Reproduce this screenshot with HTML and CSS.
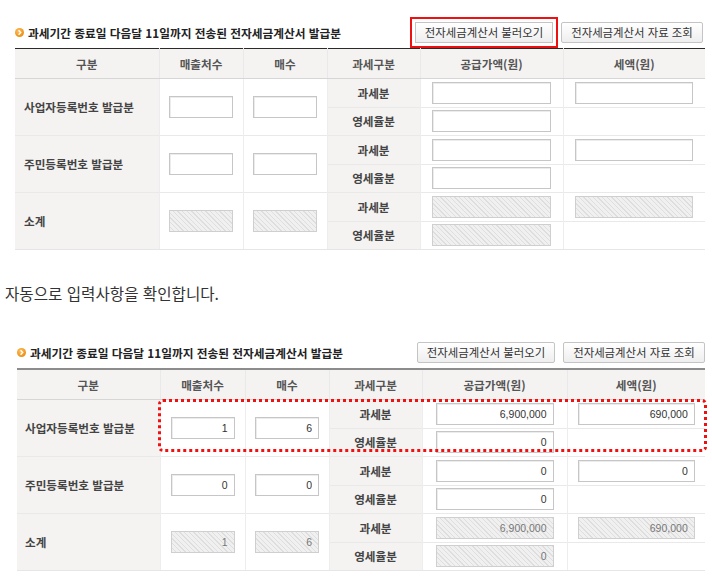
FILE: index.html
```html
<!DOCTYPE html>
<html lang="ko">
<head>
<meta charset="utf-8">
<title>전자세금계산서 발급분</title>
<link rel="stylesheet" href="styles.css">
</head>
<body>
<div class="section s1">
  <div class="bar">
    <h3 class="title"><svg class="bullet" viewBox="0 0 10 10" width="9" height="9"><defs><radialGradient id="og1" cx="40%" cy="35%" r="70%"><stop offset="0" stop-color="#ffc060"/><stop offset="1" stop-color="#e98a0c"/></radialGradient></defs><circle cx="5" cy="5" r="5" fill="url(#og1)"/><path d="M4 2.6 L6.3 5 L4 7.4" fill="none" stroke="#fff" stroke-width="1.5"/></svg>과세기간 종료일 다음달 11일까지 전송된 전자세금계산서 발급분</h3>
    <div class="btns">
      <button class="btn btn-load hl">전자세금계산서 불러오기</button>
      <button class="btn btn-view">전자세금계산서 자료 조회</button>
    </div>
  </div>
  <table class="grid">
    <colgroup><col class="c1"><col class="c2"><col class="c3"><col class="c4"><col class="c5"><col class="c6"></colgroup>
    <thead>
      <tr><th>구분</th><th>매출처수</th><th>매수</th><th>과세구분</th><th>공급가액(원)</th><th>세액(원)</th></tr>
    </thead>
    <tbody>
      <tr class="grp"><th rowspan="2" class="lbl">사업자등록번호 발급분</th><td rowspan="2"><input class="in sm"></td><td rowspan="2"><input class="in sm"></td><th class="kind">과세분</th><td><input class="in lg"></td><td><input class="in lg2"></td></tr>
      <tr class="sub"><th class="kind">영세율분</th><td><input class="in lg"></td><td></td></tr>
      <tr class="grp"><th rowspan="2" class="lbl">주민등록번호 발급분</th><td rowspan="2"><input class="in sm"></td><td rowspan="2"><input class="in sm"></td><th class="kind">과세분</th><td><input class="in lg"></td><td><input class="in lg2"></td></tr>
      <tr class="sub"><th class="kind">영세율분</th><td><input class="in lg"></td><td></td></tr>
      <tr class="grp"><th rowspan="2" class="lbl">소계</th><td rowspan="2"><input class="in sm dis" disabled></td><td rowspan="2"><input class="in sm dis" disabled></td><th class="kind">과세분</th><td><input class="in lg dis" disabled></td><td><input class="in lg2 dis" disabled></td></tr>
      <tr class="sub last"><th class="kind">영세율분</th><td><input class="in lg dis" disabled></td><td></td></tr>
    </tbody>
  </table>
</div>

<p class="note">자동으로 입력사항을 확인합니다.</p>

<div class="section s2">
  <div class="bar">
    <h3 class="title"><svg class="bullet" viewBox="0 0 10 10" width="9" height="9"><defs><radialGradient id="og2" cx="40%" cy="35%" r="70%"><stop offset="0" stop-color="#ffc060"/><stop offset="1" stop-color="#e98a0c"/></radialGradient></defs><circle cx="5" cy="5" r="5" fill="url(#og2)"/><path d="M4 2.6 L6.3 5 L4 7.4" fill="none" stroke="#fff" stroke-width="1.5"/></svg>과세기간 종료일 다음달 11일까지 전송된 전자세금계산서 발급분</h3>
    <div class="btns">
      <button class="btn btn-load">전자세금계산서 불러오기</button>
      <button class="btn btn-view">전자세금계산서 자료 조회</button>
    </div>
  </div>
  <table class="grid">
    <colgroup><col class="c1"><col class="c2"><col class="c3"><col class="c4"><col class="c5"><col class="c6"></colgroup>
    <thead>
      <tr><th>구분</th><th>매출처수</th><th>매수</th><th>과세구분</th><th>공급가액(원)</th><th>세액(원)</th></tr>
    </thead>
    <tbody>
      <tr class="grp"><th rowspan="2" class="lbl">사업자등록번호 발급분</th><td rowspan="2"><input class="in sm" value="1"></td><td rowspan="2"><input class="in sm" value="6"></td><th class="kind">과세분</th><td><input class="in lg" value="6,900,000"></td><td><input class="in lg2" value="690,000"></td></tr>
      <tr class="sub"><th class="kind">영세율분</th><td><input class="in lg" value="0"></td><td></td></tr>
      <tr class="grp"><th rowspan="2" class="lbl">주민등록번호 발급분</th><td rowspan="2"><input class="in sm" value="0"></td><td rowspan="2"><input class="in sm" value="0"></td><th class="kind">과세분</th><td><input class="in lg" value="0"></td><td><input class="in lg2" value="0"></td></tr>
      <tr class="sub"><th class="kind">영세율분</th><td><input class="in lg" value="0"></td><td></td></tr>
      <tr class="grp"><th rowspan="2" class="lbl">소계</th><td rowspan="2"><input class="in sm dis" value="1" disabled></td><td rowspan="2"><input class="in sm dis" value="6" disabled></td><th class="kind">과세분</th><td><input class="in lg dis" value="6,900,000" disabled></td><td><input class="in lg2 dis" value="690,000" disabled></td></tr>
      <tr class="sub last"><th class="kind">영세율분</th><td><input class="in lg dis" value="0" disabled></td><td></td></tr>
    </tbody>
  </table>
  <div class="mark"></div>
</div>
</body>
</html>
```

FILE: styles.css
```css
html, body {
  margin: 0;
  padding: 0;
  background: #fff;
}
body {
  font-family: "Noto Sans CJK KR", "Noto Sans", sans-serif;
  color: #333;
}

.section {
  margin: 0 7px 0 15px;
}
.s1 {
  margin-top: 22px;
}
.s2 {
  margin-top: 39px;
  margin-left: 17px;
  position: relative;
}

.bar {
  display: flex;
  align-items: center;
  justify-content: space-between;
  height: 21px;
  margin-bottom: 5px;
}
.title {
  display: flex;
  align-items: center;
  gap: 4px;
  margin: 0;
  font-size: 11.7px;
  line-height: 14px;
  font-weight: bold;
  color: #222;
}
.bullet {
  display: block;
  flex: none;
}
.btns {
  display: flex;
  gap: 8px;
  padding-right: 2px;
}
.s2 .btns {
  padding-right: 0;
}
.btn {
  height: 21px;
  padding: 0;
  border: 1px solid #c4c4c4;
  border-radius: 2px;
  background: linear-gradient(#ffffff, #eeeeee);
  font-family: "Noto Sans CJK KR", sans-serif;
  font-size: 11.4px;
  line-height: 19px;
  color: #333;
}
.btn-load {
  width: 138px;
}
.btn-view {
  width: 142px;
}
.hl {
  border-radius: 0;
  outline: 2px solid #ee1111;
  outline-offset: 3px;
}

.note {
  margin: 33px 0 0 5px;
  font-size: 15.6px;
  line-height: 20px;
  color: #333;
}

.grid {
  border-collapse: collapse;
  table-layout: fixed;
  width: 690px;
  border-top: 1px solid #2a2a2a;
}
.s2 .grid {
  width: 688px;
  border-top: 2px solid #8c8c8c;
}
.s1 .c1 { width: 144px; }
.s1 .c2 { width: 84px; }
.s1 .c3 { width: 84px; }
.s1 .c4 { width: 93px; }
.s1 .c5 { width: 143px; }
.s1 .c6 { width: 142px; }
.s2 .c1 { width: 143px; }
.s2 .c2 { width: 85px; }
.s2 .c3 { width: 84px; }
.s2 .c4 { width: 93px; }
.s2 .c5 { width: 145px; }
.s2 .c6 { width: 138px; }

.grid th,
.grid td {
  padding: 0;
  font-size: 11.6px;
  line-height: 14px;
}
.grid thead th {
  height: 29px;
  background: #f4f3f2;
  color: #555;
  font-weight: bold;
  border-bottom: 1px solid #d6d6d6;
  border-left: 1px solid #e9e9e9;
}
.grid thead th:first-child {
  border-left: 0;
}
.grid tbody tr {
  height: 28.5px;
}
.grid tbody th,
.grid tbody td {
  border-left: 1px solid #ededed;
  border-top: 1px solid #e9e9e9;
  text-align: center;
  vertical-align: middle;
}
.grid tbody .lbl {
  border-left: 0;
  background: #f4f3f2;
  text-align: left;
  padding-left: 9px;
  color: #444;
  font-weight: bold;
}
.s2 .grid tbody .lbl {
  padding-left: 8px;
}
.grid tbody .kind {
  background: #f4f3f2;
  color: #444;
  font-weight: bold;
}
.grid tbody tr.last th,
.grid tbody tr.last td,
.grid tbody tr.grp:nth-last-child(2) > [rowspan] {
  border-bottom: 1px solid #e6e6e6;
}

.in {
  display: block;
  margin: 0 auto;
  box-sizing: border-box;
  height: 22px;
  padding: 0 6px 0 4px;
  border: 1px solid #c6c6c6;
  box-shadow: inset 1px 1px 0 #ececec;
  background: #fff;
  font-family: "Liberation Sans", Arial, sans-serif;
  font-size: 10.5px;
  color: #333;
  text-align: right;
  outline: none;
}
.sm { width: 64px; }
.lg { width: 119px; }
.lg2 { width: 118px; }
.s2 .lg { width: 118px; }
.s2 .lg2 { width: 117px; }
.in.dis {
  border-color: #cfcfcf;
  box-shadow: none;
  color: #777;
  background: repeating-linear-gradient(45deg, #f0f0f0 0, #f0f0f0 2.5px, #dedede 2.5px, #dedede 3.3px);
}

.mark {
  position: absolute;
  left: 141px;
  top: 57px;
  width: 549px;
  height: 53px;
  box-sizing: border-box;
  border: 3px dotted #f01010;
  border-radius: 5px;
  pointer-events: none;
}
```
